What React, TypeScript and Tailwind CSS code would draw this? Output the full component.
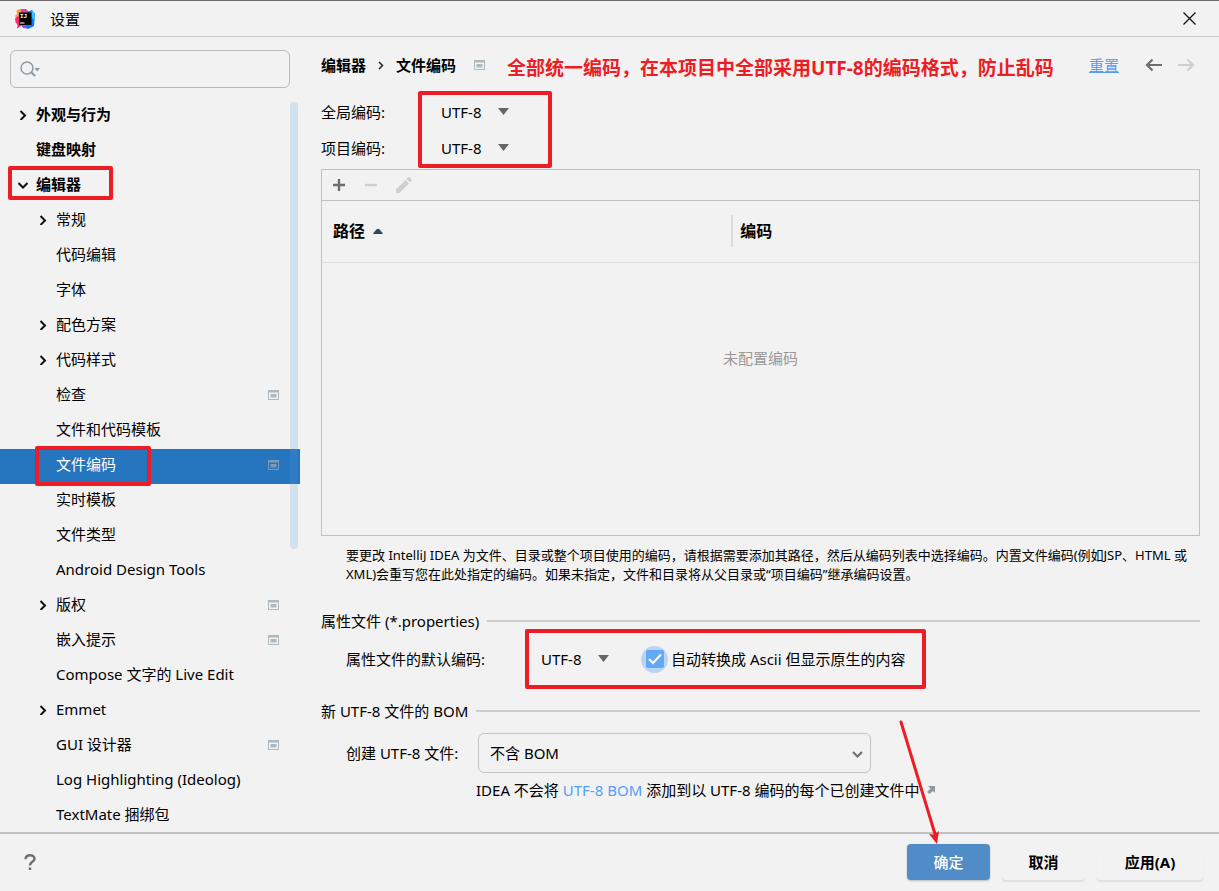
import { useState } from "react";
import type { ReactNode } from "react";

type TreeItem = {
  label: string;
  level: 0 | 1;
  arrow?: "right" | "down";
  project?: boolean;
  mark?: string;
};

const TREE: TreeItem[] = [
  { label: "外观与行为", level: 0, arrow: "right" },
  { label: "键盘映射", level: 0 },
  { label: "编辑器", level: 0, arrow: "down", mark: "-top-[3px] left-2 h-[34px] w-[105px]" },
  { label: "常规", level: 1, arrow: "right" },
  { label: "代码编辑", level: 1 },
  { label: "字体", level: 1 },
  { label: "配色方案", level: 1, arrow: "right" },
  { label: "代码样式", level: 1, arrow: "right" },
  { label: "检查", level: 1, project: true },
  { label: "文件和代码模板", level: 1 },
  { label: "文件编码", level: 1, project: true, mark: "-top-[3px] left-[35px] h-10 w-[116px]" },
  { label: "实时模板", level: 1 },
  { label: "文件类型", level: 1 },
  { label: "Android Design Tools", level: 1 },
  { label: "版权", level: 1, arrow: "right", project: true },
  { label: "嵌入提示", level: 1, project: true },
  { label: "Compose 文字的 Live Edit", level: 1 },
  { label: "Emmet", level: 1, arrow: "right" },
  { label: "GUI 设计器", level: 1, project: true },
  { label: "Log Highlighting (Ideolog)", level: 1 },
  { label: "TextMate 捆绑包", level: 1 },
];

function Logo() {
  return (
    <svg className="h-5 w-5" viewBox="0 0 20 20" aria-hidden>
      <path d="M1.500 1 6 0l6 2-4 9H2L0 7l2-2z" fill="#fc9a3d" />
      <path d="M0 9.500 3 7l6 5-3 5-4 2.500.5-3.500L.5 13z" fill="#fe2877" />
      <path d="M6 0h5l3 3-5 4-3-3z" fill="#e0459c" />
      <path d="m12 3 5-2 3 4-1 12-6 3-6-3 3-8z" fill="#087cfa" />
      <path d="m17 1 3 4-.5 7L16 7z" fill="#2fc4ff" />
      <path d="m6 16 5 0 1 3.500-4-.5z" fill="#8a55e0" />
      <rect x="4" y="3.500" width="12.500" height="12.500" fill="#000" />
      <text x="5" y="9" className="font-mono text-[6px] font-bold" fill="#fff">
        IJ
      </text>
      <rect x="5" y="13.500" width="4.500" height="1" fill="#fff" />
    </svg>
  );
}

function ProjectIcon({ dim }: { dim?: boolean }) {
  return (
    <svg className="h-[10px] w-[11px] shrink-0" viewBox="0 0 11 10" fill={dim ? "#7f9bb3" : "#adb8bf"} aria-hidden>
      <path d="M0 0h11v10H0zM1 2.500v6.500h9V2.500z" fillRule="evenodd" />
      <rect x="2.500" y="4" width="6" height="3.500" />
    </svg>
  );
}

function Chevron({ down }: { down?: boolean }) {
  return (
    <svg className="mt-0.5 h-[10px] w-[10px]" viewBox="0 0 10 10" fill="none" stroke="#111" strokeWidth="2" aria-hidden>
      <path d={down ? "M.5 3 5 7.500 9.500 3" : "M2.500 1 7 5.500 2.500 10"} />
    </svg>
  );
}

// Red marker frame laid over the control it points at.
function Mark({ className }: { className: string }) {
  return <span aria-hidden className={`pointer-events-none absolute z-10 rounded-xs border-4 border-[#ee1c25] ${className}`} />;
}

function EncodingSelect({ id }: { id: string }) {
  return (
    <div className="relative w-[70px]">
      <select id={id} className="block h-6 w-full appearance-none bg-transparent leading-6 outline-none">
        <option>UTF-8</option>
        <option>GBK</option>
        <option>ISO-8859-1</option>
      </select>
      <svg className="pointer-events-none absolute top-2 right-0.5 h-[7px] w-[11px]" viewBox="0 0 11 7" fill="#666" aria-hidden>
        <path d="M0 0h11L5.500 7z" />
      </svg>
    </div>
  );
}

function SectionTitle({ children }: { children: ReactNode }) {
  return (
    <div className="flex h-6 shrink-0 items-center gap-2">
      <h2>{children}</h2>
      <div className="h-0.5 flex-1 bg-[#cdcdcd]" />
    </div>
  );
}

function Sidebar() {
  const [query, setQuery] = useState("");
  const [selected, setSelected] = useState("文件编码");

  return (
    <aside className="flex w-[300px] shrink-0 flex-col">
      <div className="relative mx-[10px] mt-[13px] shrink-0">
        <svg className="pointer-events-none absolute top-[11px] left-[10px] h-4 w-5" viewBox="0 0 20 16" fill="none" aria-hidden>
          <circle cx="7" cy="7" r="6" stroke="#8f9aa2" strokeWidth="1.500" />
          <path d="m11 11 4 4" stroke="#8f9aa2" strokeWidth="2" />
          <path d="M14.500 7h5.500l-2.700 3.500z" fill="#8f9aa2" />
        </svg>
        <input
          aria-label="搜索"
          value={query}
          onChange={(e) => setQuery(e.target.value)}
          className="block h-[38px] w-full rounded-md border border-[#b9b9b9] bg-transparent pr-3 pl-9 outline-none"
        />
      </div>

      <nav className="relative mt-[11px] min-h-0 flex-1 overflow-hidden">
        <ul>
          {TREE.map((item) => {
            const active = item.label === selected;
            return (
              <li key={item.label} className="relative">
                <button
                  onClick={() => setSelected(item.label)}
                  className={`flex h-[35px] w-full items-center pr-[21px] pb-1.5 text-left ${item.level ? "pl-[38px]" : "pl-[18px] font-bold"} ${active ? "bg-[#2675bf] text-white" : ""}`}
                >
                  <span className="flex w-[18px] shrink-0">
                    {item.arrow && <Chevron down={item.arrow === "down"} />}
                  </span>
                  <span className="flex-1">{item.label}</span>
                  {item.project && (
                    <span className="pt-0.5">
                      <ProjectIcon dim={active} />
                    </span>
                  )}
                </button>
                {item.mark && <Mark className={item.mark} />}
              </li>
            );
          })}
        </ul>
        <div aria-hidden className="absolute top-[3px] right-0.5 h-[447px] w-2 rounded-full bg-[#5a9fe0]/20" />
      </nav>
    </aside>
  );
}

function PathTable() {
  return (
    <div className="mt-[3px] flex min-h-0 flex-1 flex-col border border-[#c0c0c0]">
      <div className="flex h-[31px] shrink-0 items-center gap-4 border-b border-[#c0c0c0] pl-[9px]">
        <button aria-label="添加">
          <svg className="h-4 w-4" viewBox="0 0 16 16" fill="none" stroke="#6e6e6e" strokeWidth="2.400" aria-hidden>
            <path d="M8 2v12M2 8h12" />
          </svg>
        </button>
        <button aria-label="移除" disabled>
          <svg className="h-4 w-4" viewBox="0 0 16 16" fill="none" stroke="#cfcfcf" strokeWidth="2.400" aria-hidden>
            <path d="M2 8h12" />
          </svg>
        </button>
        <button aria-label="编辑" disabled>
          <svg className="h-[18px] w-[18px]" viewBox="0 0 18 18" fill="#cfcfcf" aria-hidden>
            <path d="m1 13.500 9.500-9.500 3.500 3.500L4.500 17H1zM11.500 3 13 1.500q1-1 2 0L16.500 3q1 1 0 2L15 6.500z" />
          </svg>
        </button>
      </div>
      <table className="w-full table-fixed">
        <thead>
          <tr className="h-[61px] border-b border-[#dcdcdc] text-left text-base">
            <th className="w-7/15 p-0 font-bold">
              <div className="flex h-8 items-center gap-2 pl-[11px]">
                路径
                <svg className="h-[6px] w-[10px]" viewBox="0 0 10 6" fill="#2f4858" aria-hidden>
                  <path d="M0 6Q1 4 3 2 5-.5 7 2q2 2 3 4z" />
                </svg>
              </div>
            </th>
            <th className="p-0 font-bold">
              <div className="flex h-8 items-center border-l-2 border-[#dcdcdc] pl-[7px]">编码</div>
            </th>
          </tr>
        </thead>
        <tbody>
          <tr>
            <td colSpan={2} className="pt-[85px] text-center text-[#999]">
              未配置编码
            </td>
          </tr>
        </tbody>
      </table>
    </div>
  );
}

function FileEncodings() {
  const [convert, setConvert] = useState(true);

  return (
    <main className="flex min-w-0 flex-1 flex-col pt-[11px] pr-[19px] pb-[31px] pl-[21px]">
      <header className="flex h-[34px] shrink-0 items-center whitespace-nowrap">
        <span className="font-bold">编辑器</span>
        <svg className="mx-3 h-[9px] w-[6px]" viewBox="0 0 6 9" fill="none" stroke="#222" strokeWidth="1.500" aria-hidden>
          <path d="M1 1l3.500 3.500L1 8" />
        </svg>
        <h1 className="mr-[18px] font-bold">文件编码</h1>
        <ProjectIcon />
        <p className="ml-[22px] pt-1.5 text-[19px] font-bold text-[#ee1c25]">
          全部统一编码，在本项目中全部采用UTF-8的编码格式，防止乱码
        </p>
        <a href="#reset" className="ml-auto text-[#589df6] underline">
          重置
        </a>
        <button aria-label="后退" className="ml-[26px]">
          <svg className="h-[14px] w-[17px]" viewBox="0 0 17 14" fill="none" stroke="#6e6e6e" strokeWidth="2.200" aria-hidden>
            <path d="M17 7H2M7.500 1.500 2 7l5.500 5.500" />
          </svg>
        </button>
        <button aria-label="前进" disabled className="mr-[5px] ml-4">
          <svg className="h-[14px] w-[17px]" viewBox="0 0 17 14" fill="none" stroke="#cfcfcf" strokeWidth="2.200" aria-hidden>
            <path d="M0 7h15M9.500 1.500 15 7l-5.500 5.500" />
          </svg>
        </button>
      </header>

      <div className="relative mt-3 shrink-0">
        <div className="flex h-9 items-center">
          <label htmlFor="global" className="w-[120px]">全局编码:</label>
          <EncodingSelect id="global" />
        </div>
        <div className="flex h-9 items-center">
          <label htmlFor="project" className="w-[120px]">项目编码:</label>
          <EncodingSelect id="project" />
        </div>
        <Mark className="-top-[3px] left-[97px] h-[77px] w-[134px]" />
      </div>

      <PathTable />

      <p className="mt-[10px] mb-[25px] pl-[25px] text-[13px] leading-[19px]">
        要更改 IntelliJ IDEA 为文件、目录或整个项目使用的编码，请根据需要添加其路径，然后从编码列表中选择编码。内置文件编码(例如JSP、HTML 或 XML)会重写您在此处指定的编码。如果未指定，文件和目录将从父目录或“项目编码”继承编码设置。
      </p>

      <SectionTitle>属性文件 (*.properties)</SectionTitle>
      <div className="mt-[-4px] mb-[10px] flex h-[60px] shrink-0 items-center pl-[25px]">
        <label htmlFor="properties" className="w-[179px]">属性文件的默认编码:</label>
        <div className="relative flex h-full items-center pr-5 pl-4">
          <EncodingSelect id="properties" />
          <label className="ml-[30px] flex items-center gap-[3px]">
            <span className="relative flex h-[27px] w-[27px] items-center justify-center rounded-full bg-[#b9d5f3]">
              <input
                type="checkbox"
                checked={convert}
                onChange={(e) => setConvert(e.target.checked)}
                className="h-[18px] w-[18px] appearance-none rounded-xs bg-white checked:bg-[#62a8f2]"
              />
              {convert && (
                <svg className="pointer-events-none absolute h-[18px] w-[18px]" viewBox="0 0 18 18" fill="none" stroke="#fff" strokeWidth="2" aria-hidden>
                  <path d="m3 9 4 4 8-8.500" />
                </svg>
              )}
            </span>
            自动转换成 Ascii 但显示原生的内容
          </label>
          <Mark className="inset-0" />
        </div>
      </div>

      <SectionTitle>新 UTF-8 文件的 BOM</SectionTitle>
      <div className="mt-[10px] flex shrink-0 items-center pl-[25px]">
        <label htmlFor="bom" className="w-[132px]">创建 UTF-8 文件:</label>
        <div className="relative w-[393px]">
          <select id="bom" className="block h-10 w-full appearance-none rounded-md border border-[#c4c4c4] bg-transparent px-[11px] outline-none">
            <option>不含 BOM</option>
            <option>含 BOM</option>
          </select>
          <svg className="pointer-events-none absolute top-[18px] right-2 h-[7px] w-[11px]" viewBox="0 0 11 7" fill="none" stroke="#6e6e6e" strokeWidth="2" aria-hidden>
            <path d="m1 1 4.500 4.500L10 1" />
          </svg>
        </div>
      </div>
      <p className="mt-[6px] flex shrink-0 items-center pl-[155px] leading-[22px] whitespace-pre">
        IDEA 不会将 <a href="#bom-help" className="text-[#589df6]">UTF-8 BOM</a> 添加到以 UTF-8 编码的每个已创建文件中
        <svg className="ml-2 h-2 w-2" viewBox="0 0 8 8" aria-hidden>
          <path d="M1 0h7v7L6 5 2.500 8 0 6l3.500-3.500z" fill="#8f9aa2" />
        </svg>
      </p>
    </main>
  );
}

export default function App() {
  return (
    <div
      lang="zh-CN"
      className="flex h-screen flex-col overflow-hidden border-t border-[#6b6b6b] bg-[#f2f2f2] font-['Noto_Sans','Noto_Sans_CJK_SC',sans-serif] text-[15px] leading-5 text-black"
    >
      <div className="flex h-9 shrink-0 items-center border-b border-[#cdcdcd] pr-[23px] pl-[15px]">
        <Logo />
        <span className="ml-[15px]">设置</span>
        <button aria-label="关闭" className="ml-auto">
          <svg className="h-[13px] w-[13px]" viewBox="0 0 13 13" fill="none" stroke="#111" strokeWidth="1.300" aria-hidden>
            <path d="m.5.5 12 12M12.500.5l-12 12" />
          </svg>
        </button>
      </div>

      <div className="flex min-h-0 flex-1">
        <Sidebar />
        <FileEncodings />
      </div>

      <footer className="flex h-[59px] shrink-0 items-center border-t-2 border-[#c0c0c0] pr-4 pb-0.5 pl-6 font-bold">
        <button aria-label="帮助" className="mr-auto">
          <svg className="h-4 w-3" viewBox="0 0 12 16" fill="none" stroke="#6e6e6e" strokeWidth="2.400" aria-hidden>
            <path d="M1.500 5.200C1.500 2.500 3.500 1.200 6 1.200s4.500 1.300 4.500 3.600C10.500 8 6 7.700 6 11.500M6 13.500V16" />
          </svg>
        </button>
        <div className="flex gap-3">
          <div className="relative">
            <button className="h-9 w-[83px] rounded-sm bg-[#508cc8] font-medium text-white shadow-[0_1px_2px_#bbb]">确定</button>
            <svg className="pointer-events-none absolute bottom-full -left-2 h-[124px] w-12" viewBox="0 0 48 124" aria-hidden>
              <path d="M2 2 36 114" stroke="#ee1c25" strokeWidth="3" strokeLinecap="round" />
              <path d="M38 124 30 114l5 .5 5-3.500z" fill="#ee1c25" />
            </svg>
          </div>
          <button className="h-9 w-[83px] rounded-sm shadow-[0_2px_1px_#e0e0e0]">取消</button>
          <button className="h-9 w-[106px] rounded-sm shadow-[0_2px_1px_#e0e0e0]">应用(A)</button>
        </div>
      </footer>
    </div>
  );
}
